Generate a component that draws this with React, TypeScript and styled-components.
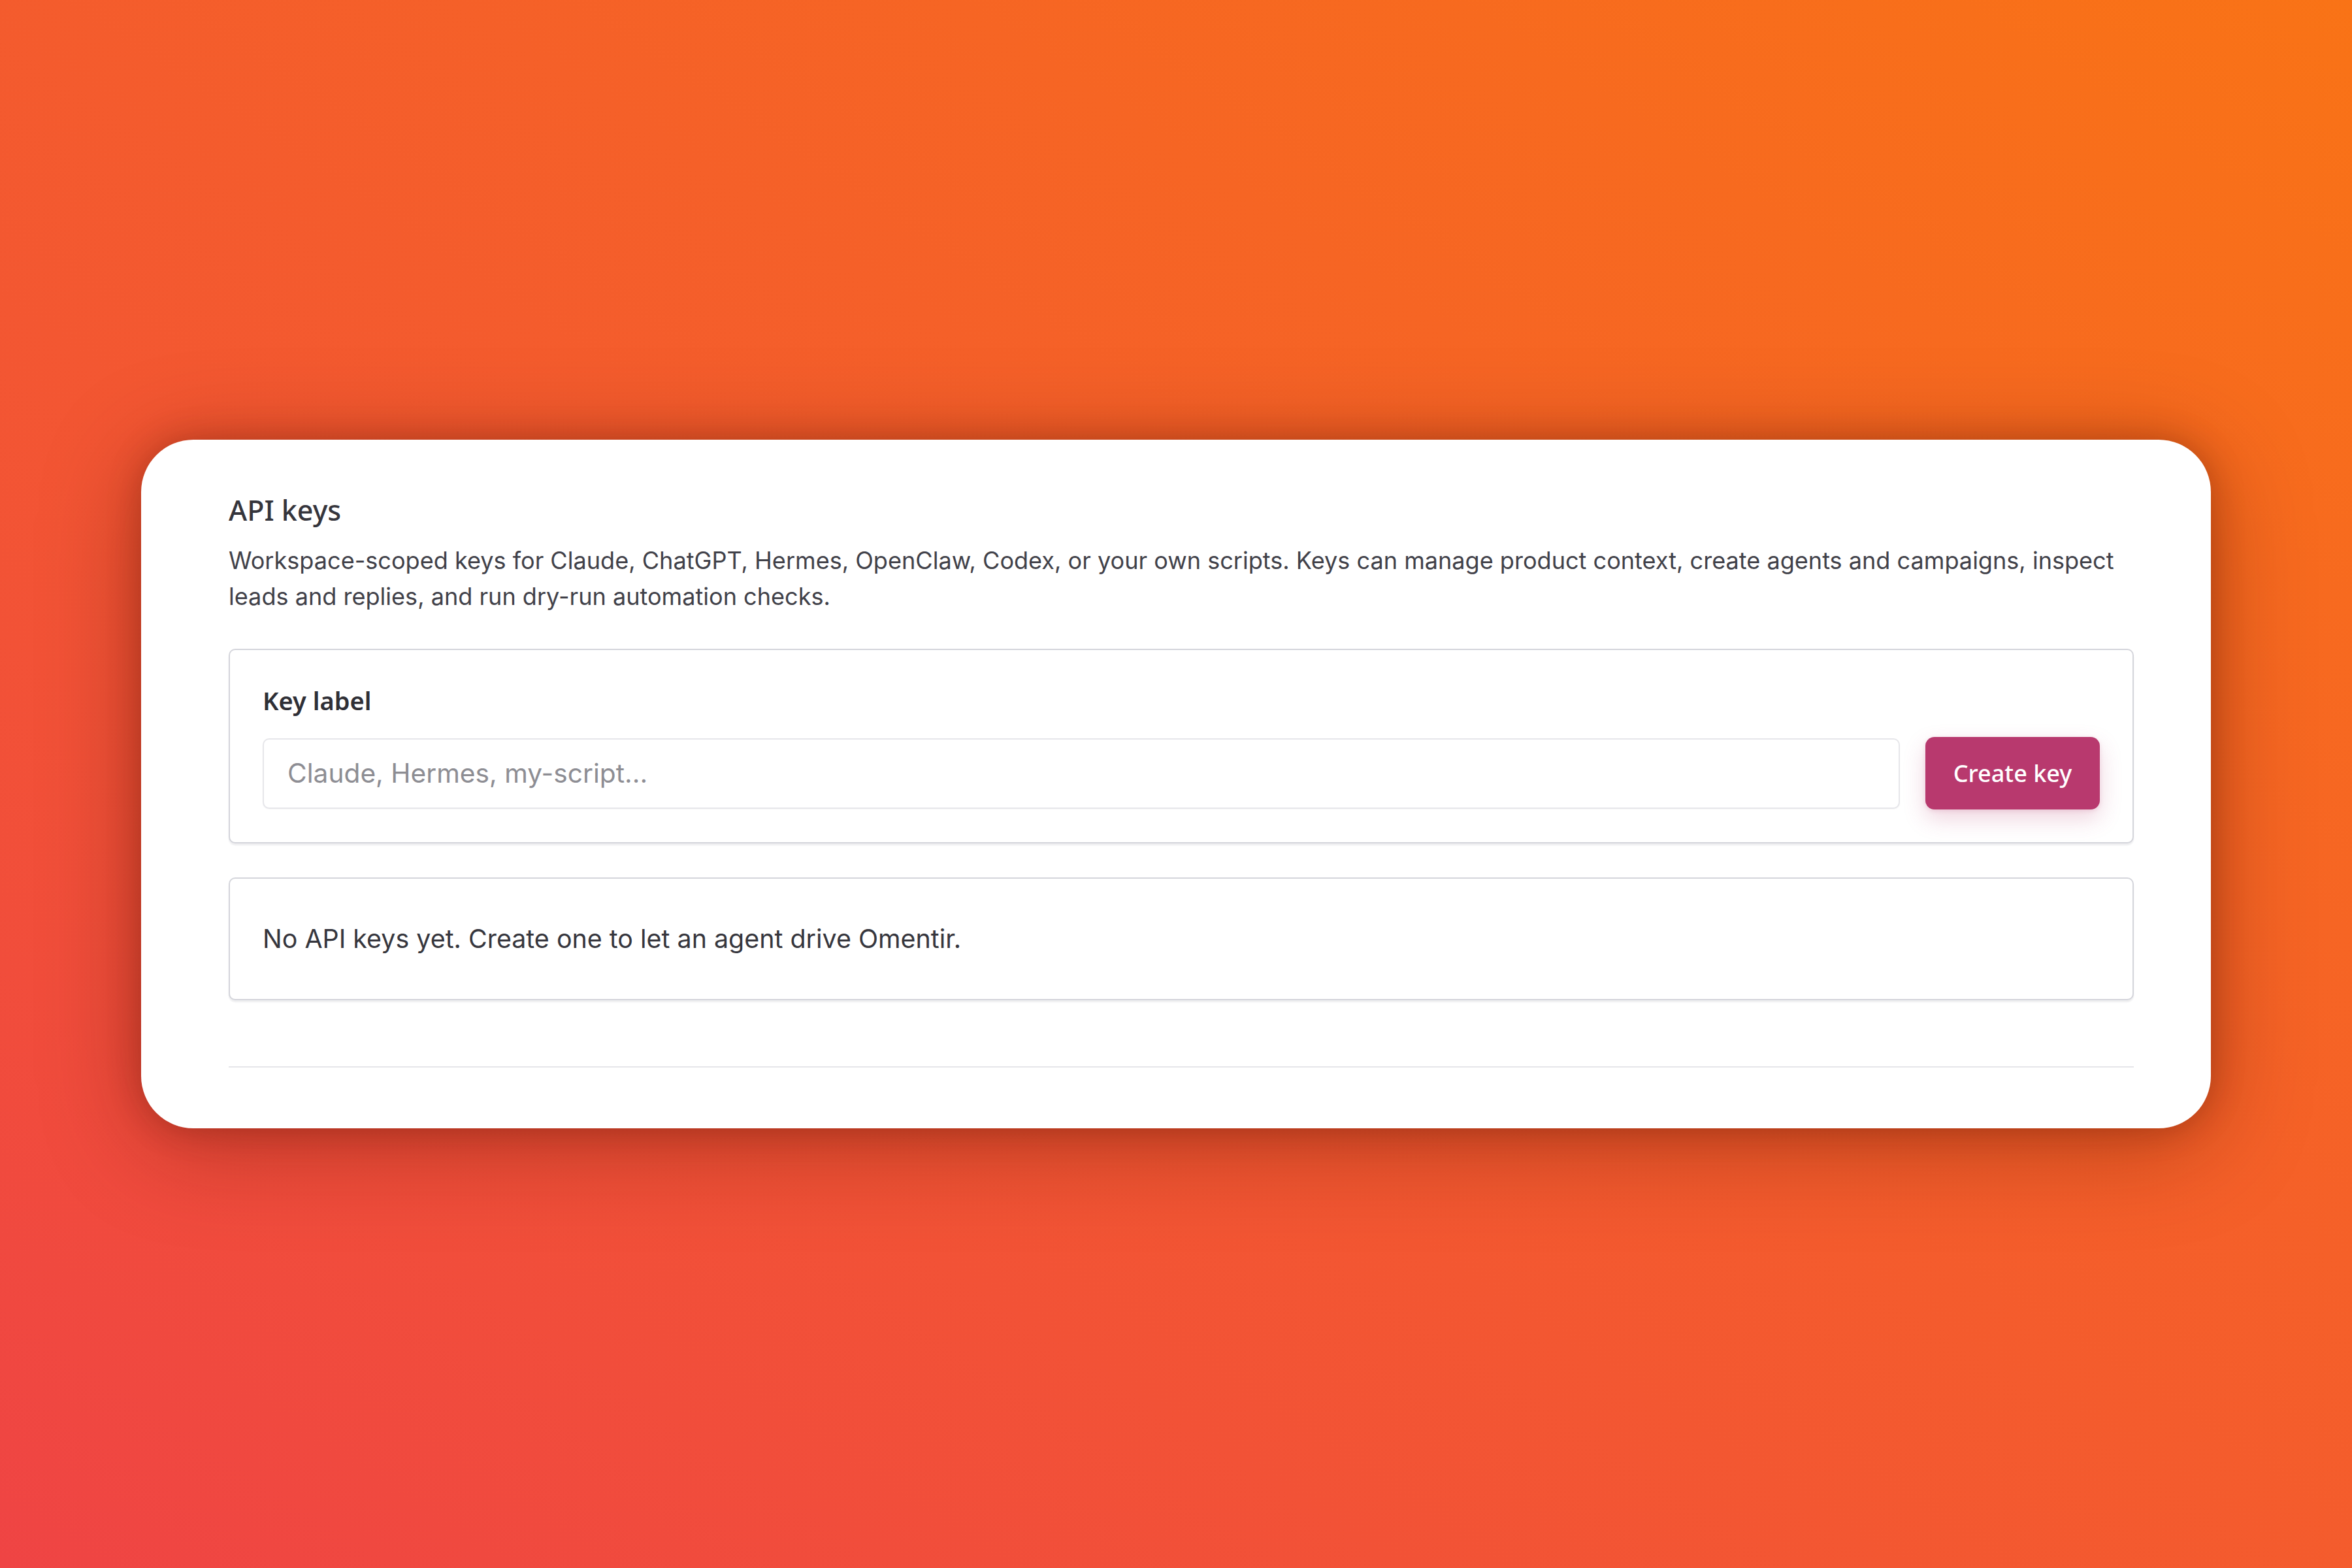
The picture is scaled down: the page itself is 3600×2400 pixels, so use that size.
import React from "react";
import styled, { createGlobalStyle } from "styled-components";

const GlobalStyle = createGlobalStyle`
  * { box-sizing: border-box; }
  html, body { margin: 0; padding: 0; }
  body {
    font-family: "Inter", "Liberation Sans", sans-serif;
    -webkit-font-smoothing: antialiased;
  }
`;

const Backdrop = styled.main`
  width: 100vw;
  height: 100vh;
  display: flex;
  align-items: center;
  justify-content: center;
  background: linear-gradient(to top right, #ef4444 0%, #f97316 100%);
  overflow: hidden;
`;

const Panel = styled.section`
  width: 3168px;
  background: #ffffff;
  border-radius: 80px;
  padding: 80px 118px 93px 134px;
  box-shadow:
    0 0 50px rgba(90, 20, 0, 0.3),
    0 24px 150px rgba(80, 15, 0, 0.38);
  display: flex;
  flex-direction: column;
`;

const Title = styled.h2`
  margin: 0;
  font-family: "Noto Sans", "Liberation Sans", sans-serif;
  font-weight: 500;
  font-size: 43px;
  line-height: 56px;
  color: #35353c;
`;

const Lead = styled.p`
  margin: 22px 0 0;
  font-size: 36.1px;
  line-height: 55px;
  color: #414149;
  font-weight: 400;
`;

const Box = styled.div<{ $pad: string }>`
  border: 2px solid #d4d5db;
  border-radius: 10px;
  background: #ffffff;
  padding: ${(p) => p.$pad};
  box-shadow: 0 3px 2px rgba(40, 40, 60, 0.08);
`;

const FormBox = styled(Box)`
  margin-top: 52px;
  display: flex;
  flex-direction: column;
`;

const Label = styled.label`
  font-family: "Noto Sans", "Liberation Sans", sans-serif;
  font-weight: 600;
  font-size: 38px;
  line-height: 54px;
  color: #2f2f36;
`;

const Row = styled.div`
  margin-top: 29px;
  display: flex;
  align-items: center;
  gap: 39px;
`;

const Field = styled.input`
  flex: 1;
  height: 108px;
  border: 2px solid #e6e6ea;
  border-radius: 10px;
  padding: 0 36px;
  font-family: "Inter", "Liberation Sans", sans-serif;
  font-size: 40.7px;
  color: #2f2f36;
  background: #fff;
  box-shadow: 0 1px 2px rgba(0, 0, 0, 0.04);
  outline: none;
  &::placeholder {
    color: #8d8d93;
  }
`;

const CreateButton = styled.button`
  width: 267px;
  height: 111px;
  border: none;
  border-radius: 14px;
  background: #b8396e;
  color: #ffffff;
  font-family: "Noto Sans", "Liberation Sans", sans-serif;
  font-weight: 500;
  font-size: 36px;
  cursor: pointer;
  box-shadow: 0 14px 34px rgba(184, 57, 110, 0.22), 0 2px 6px rgba(184, 57, 110, 0.15);
`;

const EmptyBox = styled(Box)`
  margin-top: 52px;
`;

const EmptyText = styled.p`
  margin: 0;
  font-size: 39.4px;
  line-height: 54px;
  color: #36363d;
`;

const Rule = styled.hr`
  margin: 101px 0 0;
  border: none;
  height: 2px;
  background: #e6e6ea;
`;

export default function App() {
  return (
    <>
      <GlobalStyle />
      <Backdrop>
        <Panel>
          <Title>API keys</Title>
          <Lead>
            Workspace-scoped keys for Claude, ChatGPT, Hermes, OpenClaw, Codex, or your own scripts. Keys can
            manage product context, create agents and campaigns, inspect leads and replies, and run dry-run
            automation checks.
          </Lead>
          <FormBox $pad="50px">
            <Label htmlFor="key-label">Key label</Label>
            <Row>
              <Field id="key-label" placeholder="Claude, Hermes, my-script..." />
              <CreateButton type="button">Create key</CreateButton>
            </Row>
          </FormBox>
          <EmptyBox $pad="65px 50px">
            <EmptyText>No API keys yet. Create one to let an agent drive Omentir.</EmptyText>
          </EmptyBox>
          <Rule />
        </Panel>
      </Backdrop>
    </>
  );
}
